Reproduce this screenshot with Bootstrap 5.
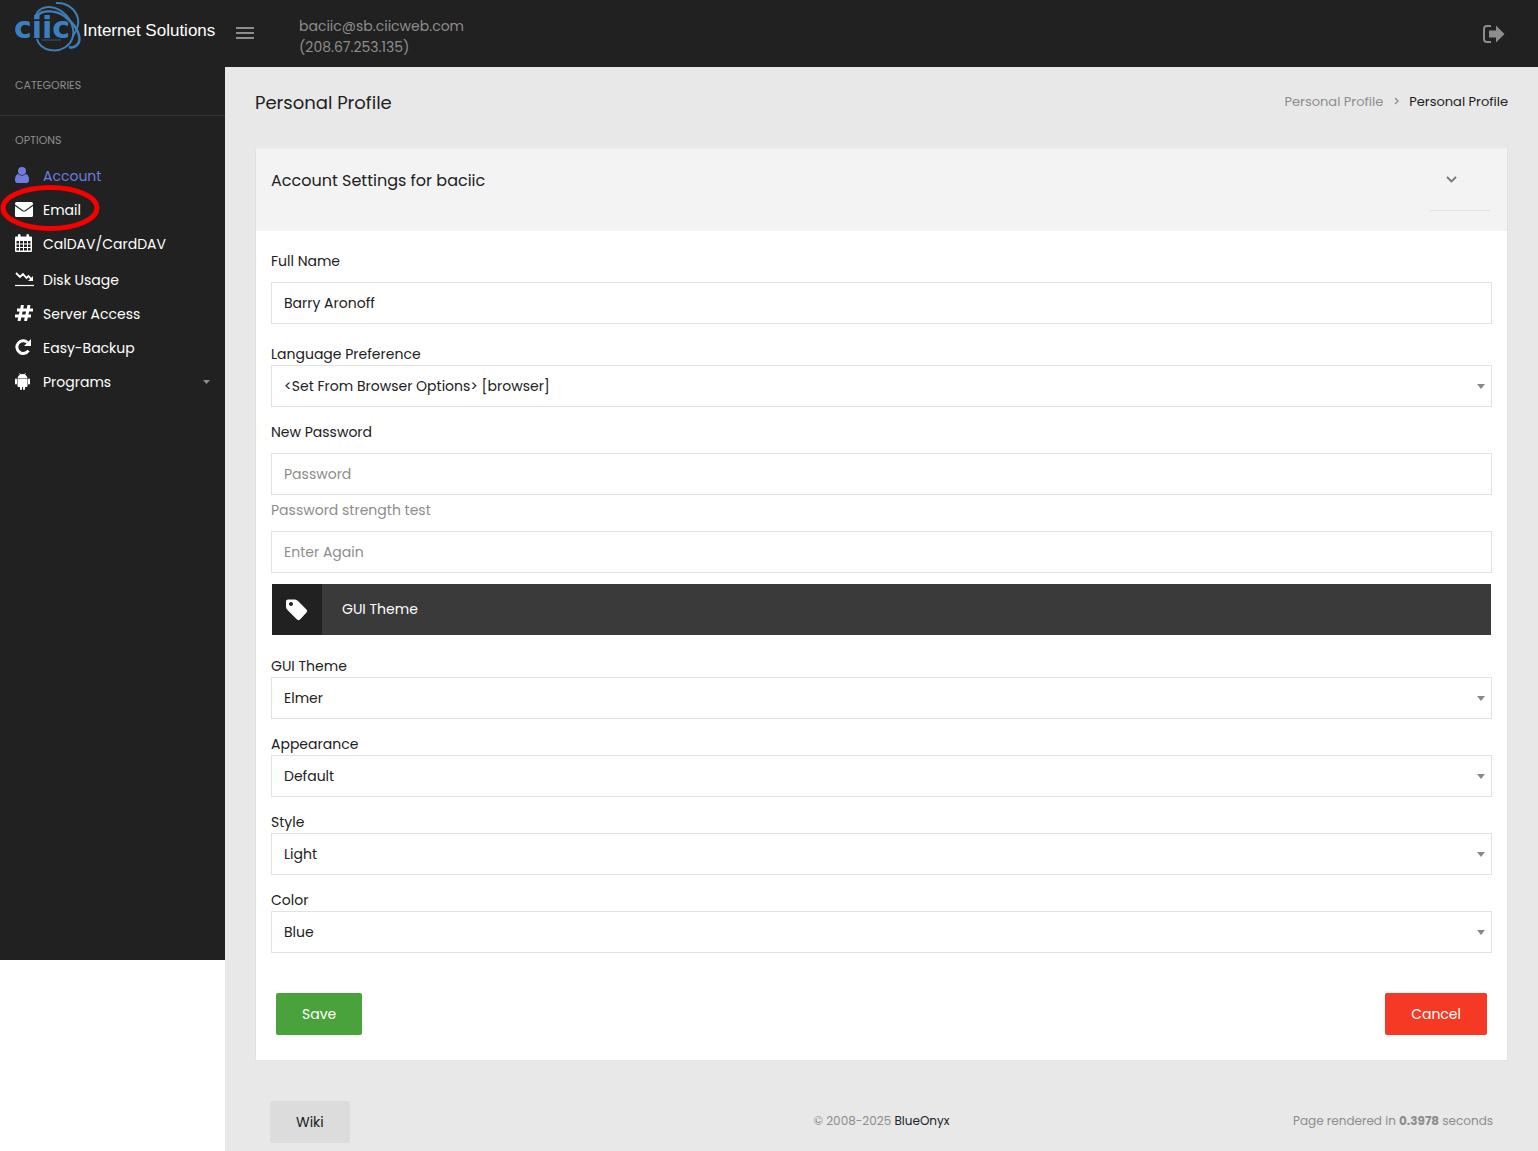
<!DOCTYPE html>
<html lang="en">
<head>
<meta charset="utf-8">
<meta name="viewport" content="width=device-width, initial-scale=1">
<title>Personal Profile</title>
<link href="https://cdn.jsdelivr.net/npm/bootstrap@5.3.0/dist/css/bootstrap.min.css" rel="stylesheet">
<style>
  body { font-family: Poppins, Inter, sans-serif; font-size: 14px; line-height: 21px; color: #212121; background: #fff; }
  a { text-decoration: none; }
  svg { display: block; flex: none; }

  .topbar { background: #212121; height: 67px; color: #8d8d8d; }
  .brand-area { width: 225px; height: 53px; padding-left: 14px; }
  .brand-name { font-family: "Liberation Sans", Arial, sans-serif; font-size: 17px; color: #fff; white-space: nowrap; }
  .brand-mark { font-family: "DejaVu Sans", sans-serif; font-weight: 700; font-size: 30px; fill: #3b7fc0; }
  .plain-btn { background: none; border: 0; padding: 0; color: #8d8d8d; }
  .whoami { padding: 16px 0 0 42px; }
  .logout { padding: 24px 33px 0 0; }

  .sidebar { width: 225px; min-height: 893px; flex: none; background: #212121; }
  .side-title { font-size: 11px; color: #8d8d8d; padding: 8px 15px; margin: 0; font-weight: 400; line-height: 20px; }
  .side-rule { border-top: 1px solid #333; margin: 12px 0 6px; }
  .side-link { display: flex; align-items: center; height: 34px; padding: 2px 15px 0; color: #fff; position: relative; }
  .side-link.active { color: #6f7be0; }
  .side-link.tall { height: 36px; padding-top: 4px; }
  .side-ico { width: 28px; flex: none; padding-bottom: 2px; }
  .ring { position: absolute; left: 0; top: -8px; }

  .main-area { background: #e8e8e8; padding: 0 30px; min-width: 0; }
  .page-head { height: 81px; padding-bottom: 11px; }
  .page-title { font-size: 18px; font-weight: 400; margin: 0; padding-top: 2px; }
  .crumbs { font-size: 13px; padding-bottom: 2px; }
  .crumbs a { color: #8d8d8d; }

  .panel { background: #fff; border: 1px solid #e2e2e2; border-top-color: #eee; border-radius: 0; }
  .panel-head { background: #f3f3f3; height: 82px; padding: 0 15px; }
  .panel-title { font-size: 16px; font-weight: 400; margin: 22px 0 0; }
  .panel-tool { width: 60px; height: 62px; border-bottom: 1px solid #e2e2e2; padding-left: 13px; margin-right: 2px; }
  .panel-body { padding: 20px 15px 25px; }
  .fields label { display: block; }
  .fields .form-control, .fields .form-select { height: 42px; border: 1px solid #e2e2e2; border-radius: 0; font-size: 14px; line-height: 21px; color: #212121; padding: 6px 12px; }
  .fields .form-control::placeholder { color: #8d8d8d; opacity: 1; }
  .fields .form-select {
    background-image: url("data:image/svg+xml,%3Csvg xmlns='http://www.w3.org/2000/svg' viewBox='0 0 8 5'%3E%3Cpath d='M0 0h8L4 5z' fill='%23888'/%3E%3C/svg%3E");
    background-size: 8px 5px; background-position: right 6px center;
  }
  .lab-gap { margin-bottom: 10px; }
  .hint { color: #8d8d8d; margin: 5px 0 10px; }
  .banner { background: #3a3a3a; color: #fff; height: 51px; margin: 11px 1px 21px; }
  .banner-ico { width: 50px; background: #212121; margin-right: 20px; }
  .block-gap { margin-bottom: 15px; }
  .act { border: 0; border-radius: 2px; height: 42px; padding: 0 26px; font-size: 14px; font-weight: 400; color: #fff; }
  .act:hover { color: #fff; opacity: .9; }
  .act-save { background: #4aa23c; }
  .act-cancel { background: #f53924; }
  .act-wiki, .act-wiki:hover { background: #dcdcdc; color: #212121; }
  .act-row { margin-top: 40px; padding: 0 5px; }
  .foot { padding: 40px 15px 8px; font-size: 12px; color: #8d8d8d; }
  .foot > div { flex: 1 1 0; }
  .foot-note { padding-bottom: 4px; }
</style>
</head>
<body>
<header class="topbar d-flex align-items-start">
  <a href="#" class="brand-area d-flex align-items-center flex-shrink-0" aria-label="ciic Internet Solutions">
    <svg width="69" height="53" viewBox="14 0 69 53" fill="none">
      <g stroke="#3f7db5">
        <path d="M35 19C36 9 45 5 55 8C67 12 75 25 73 36C71 46 61 52 50 50C43 49 38 44 37 39" stroke-width="2"/>
        <path d="M36 17C42 9 58 9 69 20C79 29 82 40 77 45C75 47 72 48 69 47" stroke-width="2.500"/>
        <path d="M56 3C66 2 76 9 78 19C79 24 77 30 73 36" stroke-width="2"/>
        <path d="M42 40h19" stroke-width="1" opacity=".6"/>
      </g>
      <text class="brand-mark" x="14" y="38">ciic</text>
    </svg>
    <span class="brand-name pt-2">Internet Solutions</span>
  </a>
  <button class="plain-btn ms-2 mt-4" type="button" aria-label="Toggle menu">
    <svg width="24" height="18" viewBox="0 0 24 18" stroke="currentColor" stroke-width="2"><path d="M3 4h18M3 9h18M3 14h18"/></svg>
  </button>
  <div class="whoami">baciic@sb.ciicweb.com<br>(208.67.253.135)</div>
  <a href="#" class="ms-auto logout text-reset" aria-label="Log out">
    <svg width="24" height="20" viewBox="0 0 24 20"><path d="M10 2H6Q3 2 3 5v10q0 3 3 3h4" fill="none" stroke="currentColor" stroke-width="2"/><path d="M8 6.500h7V1.500l8.500 8.500-8.500 8.500v-5H8z" fill="currentColor"/></svg>
  </a>
</header>

<div class="d-flex align-items-start">
  <nav class="sidebar" aria-label="Main menu">
    <h2 class="side-title">CATEGORIES</h2>
    <div class="side-rule"></div>
    <h2 class="side-title">OPTIONS</h2>
    <a href="#" class="side-link active"><span class="side-ico"><svg width="14" height="16" viewBox="0 0 14 16" fill="currentColor"><circle cx="7" cy="4" r="4"/><path d="M3 7Q7 10.500 11 7Q14 8 14 13Q14 16 11.500 16H2.500Q0 16 0 13Q0 8 3 7z"/></svg></span>Account</a>
    <a href="#" class="side-link"><span class="side-ico"><svg width="18" height="15" viewBox="0 0 18 15" fill="currentColor"><path d="M0 1.500Q0 0 1.500 0h15Q18 0 18 1.500V2.500L10.500 8Q9 9 7.500 8L0 2.500z"/><path d="M0 4L7 9Q9 10.200 11 9L18 4v9.500Q18 15 16.500 15h-15Q0 15 0 13.500z"/></svg></span>Email
      <svg class="ring" width="101" height="48" viewBox="0 0 101 48"><ellipse cx="50" cy="24" rx="47" ry="20.500" fill="none" stroke="#f60000" stroke-width="5"/></svg></a>
    <a href="#" class="side-link"><span class="side-ico"><svg width="17" height="18" viewBox="0 0 17 18"><path fill="currentColor" fill-rule="evenodd" d="M1 2.500h2V1q0-1 1.200-1T5.500 1v1.500h6V1q0-1 1.200-1T14 1v1.500h2q1 0 1 1V17q0 1-1 1H1q-1 0-1-1V3.500q0-1 1-1zM1.500 7v2.500H4V7zM5 7v2.500h3V7zM9 7v2.500h3V7zM13 7v2.500h2.500V7zM1.500 10.500v2.500H4v-2.500zM5 10.500v2.500h3v-2.500zM9 10.500v2.500h3v-2.500zM13 10.500v2.500h2.500v-2.500zM1.500 14v2.500H4V14zM5 14v2.500h3V14zM9 14v2.500h3V14zM13 14v2.500h2.500V14z"/></svg></span>CalDAV/CardDAV</a>
    <a href="#" class="side-link tall"><span class="side-ico"><svg width="19" height="16" viewBox="0 0 19 16" fill="none" stroke="currentColor"><path d="M1 2L5 6L8 3L11.500 7L13.500 5L17 9" stroke-width="1.800"/><path d="M18 5v5h-5z" fill="currentColor" stroke="none"/><path d="M0 14.500h19" stroke-width="1.200"/></svg></span>Disk Usage</a>
    <a href="#" class="side-link"><span class="side-ico"><svg width="18" height="16" viewBox="0 0 18 16" fill="none" stroke="currentColor" stroke-width="3"><path d="M7.500 0L4 16M14 0L10.500 16M2 5h16M0 11h16"/></svg></span>Server Access</a>
    <a href="#" class="side-link"><span class="side-ico"><svg width="16" height="16" viewBox="0 0 16 16"><path d="M12.500 3.500A6.300 6.300 0 1 0 13.500 11.500" fill="none" stroke="currentColor" stroke-width="3"/><path d="M16 0v7H9z" fill="currentColor"/></svg></span>Easy-Backup</a>
    <a href="#" class="side-link"><span class="side-ico"><svg width="15" height="17" viewBox="0 0 15 17" fill="currentColor"><path d="M2.500 5Q3 2.500 5 1.500L4.200 0h.6l.8 1.200Q7.500.6 9.400 1.200L10.200 0h.6L10 1.500Q12 2.500 12.500 5z"/><path d="M2.500 5.500h10V13q0 1-1 1H10v2q0 1-1 1t-1-1v-2H7v2q0 1-1 1t-1-1v-2H3.500q-1 0-1-1z"/><rect y="5.500" width="2" height="6" rx="1"/><rect x="13" y="5.500" width="2" height="6" rx="1"/></svg></span>Programs
      <svg class="ms-auto" width="7" height="4" viewBox="0 0 7 4" fill="#8d8d8d"><path d="M0 0h7L3.500 4z"/></svg></a>
  </nav>

  <main class="main-area flex-grow-1">
    <div class="page-head d-flex align-items-center justify-content-between">
      <h1 class="page-title">Personal Profile</h1>
      <nav class="crumbs d-flex align-items-center" aria-label="Breadcrumb">
        <a href="#">Personal Profile</a>
        <svg class="mx-2" width="10" height="10" viewBox="0 0 10 10" fill="none" stroke="#8d8d8d" stroke-width="1.300"><path d="M4 2l3 3-3 3"/></svg>
        <span>Personal Profile</span>
      </nav>
    </div>

    <section class="panel">
      <div class="panel-head d-flex justify-content-between">
        <h2 class="panel-title">Account Settings for baciic</h2>
        <div class="panel-tool d-flex align-items-center">
          <button class="plain-btn" type="button" aria-label="Collapse"><svg width="16" height="12" viewBox="0 0 16 12" fill="none" stroke="#777" stroke-width="1.800"><path d="M4 3L8.500 7.500L13 3"/></svg></button>
        </div>
      </div>
      <form class="panel-body fields">
        <label for="fullname" class="lab-gap">Full Name</label>
        <input id="fullname" class="form-control" type="text" value="Barry Aronoff">
        <label for="lang" class="mt-3 pt-1">Language Preference</label>
        <select id="lang" class="form-select block-gap"><option>&lt;Set From Browser Options&gt; [browser]</option></select>
        <label for="pass" class="lab-gap">New Password</label>
        <input id="pass" class="form-control" type="password" placeholder="Password">
        <p class="hint">Password strength test</p>
        <input class="form-control" type="password" placeholder="Enter Again" aria-label="Enter Again">
        <div class="banner d-flex align-items-center">
          <span class="banner-ico h-100 d-flex align-items-center justify-content-center"><svg width="22" height="22" viewBox="0 0 22 22"><path fill="#fff" fill-rule="evenodd" d="M0 2.500Q0 .5 2 .5H9Q10.500 .5 12 2L20.500 10.500Q22 12 20.500 13.500L14 20.500Q12.500 22 11 20.500L1.500 11Q0 9.500 0 8zM5 3a2 2 0 1 0 .01 0z"/></svg></span>GUI Theme
        </div>
        <label for="theme">GUI Theme</label>
        <select id="theme" class="form-select block-gap"><option>Elmer</option></select>
        <label for="appearance">Appearance</label>
        <select id="appearance" class="form-select block-gap"><option>Default</option></select>
        <label for="style">Style</label>
        <select id="style" class="form-select block-gap"><option>Light</option></select>
        <label for="color">Color</label>
        <select id="color" class="form-select"><option>Blue</option></select>
        <div class="act-row d-flex justify-content-between">
          <button type="submit" class="btn act act-save">Save</button>
          <button type="button" class="btn act act-cancel">Cancel</button>
        </div>
      </form>
    </section>

    <footer class="foot d-flex align-items-center">
      <div><button type="button" class="btn act act-wiki">Wiki</button></div>
      <div class="foot-note text-center">© 2008-2025 <a href="#" class="text-reset"><span class="text-dark">BlueOnyx</span></a></div>
      <div class="foot-note text-end">Page rendered in <strong>0.3978</strong> seconds</div>
    </footer>
  </main>
</div>
<script src="https://cdn.jsdelivr.net/npm/bootstrap@5.3.0/dist/js/bootstrap.bundle.min.js"></script>
</body>
</html>
